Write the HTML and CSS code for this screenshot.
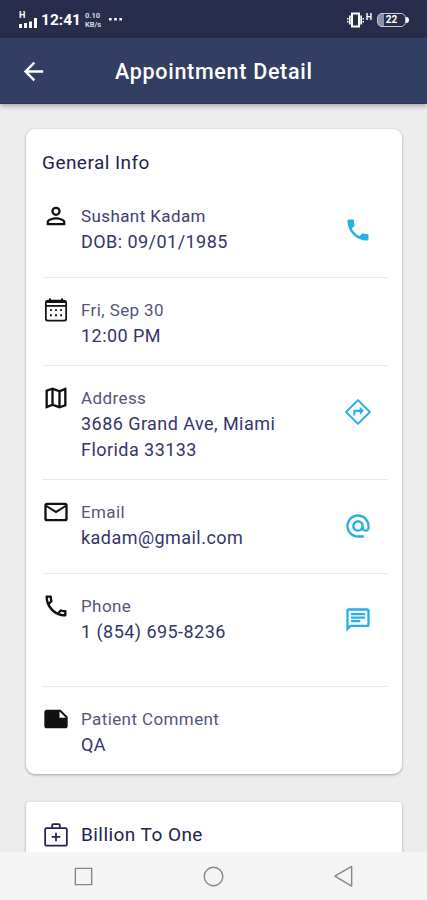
FILE: index.html
```
<!DOCTYPE html>
<html lang="en">
<head>
    <meta charset="UTF-8">
    <meta name="viewport" content="width=device-width, initial-scale=1.0">
    <title>Appointment Detail</title>
    <link rel="stylesheet" href="styles.css">
</head>
<body>
    <div class="status-bar">
        <div class="status-left">
            <div class="signal">
                <span>H</span>
                <svg width="18" height="9" viewBox="0 0 18 9"><path d="M0 5h3v4H0zM5 4h3v5H5zM10 2.500h3V9h-3zM15 -1h3v10h-3z"/></svg>
            </div>
            <span class="clock">12:41</span>
            <div class="speed"><span>0.10</span><span>KB/s</span></div>
            <svg class="dots" width="13" height="3" viewBox="0 0 13 3"><path d="M0 0h2.600v2.600H0zM5.200 0h2.600v2.600H5.200zM10.400 0H13v2.600h-2.600z"/></svg>
        </div>
        <div class="status-right">
            <svg width="17" height="16" viewBox="0 0 17 16"><path d="M5 1.500h7v13H5z" fill="none" stroke="#fff" stroke-width="2"/><path d="M2 3.500h1.700v9H2zM0 6h1.500v1.500H0zM0 9h1.500v1.500H0zM13.300 3.500H15v9h-1.700zM15.500 6H17v1.500h-1.500zM15.500 9H17v1.500h-1.500z"/></svg>
            <span class="net">H</span>
            <div class="battery"><span>22</span></div>
        </div>
    </div>

    <header class="app-bar">
        <svg class="back" viewBox="0 0 24 24"><path d="M20 11H7.830l5.590-5.590L12 4l-8 8 8 8 1.410-1.410L7.830 13H20v-2z"/></svg>
        <h1>Appointment Detail</h1>
    </header>

    <main class="content">
        <section class="card">
            <h2>General Info</h2>
            <div class="row">
                <svg class="icon" viewBox="0 0 24 24"><path d="M12 5.900a2.100 2.100 0 1 1 0 4.200 2.100 2.100 0 0 1 0-4.200m0 9c2.970 0 6.100 1.460 6.100 2.100v1.100H5.900V17c0-.640 3.130-2.100 6.100-2.100M12 4C9.790 4 8 5.790 8 8s1.790 4 4 4 4-1.790 4-4-1.790-4-4-4zm0 9c-2.670 0-8 1.340-8 4v3h16v-3c0-2.660-5.330-4-8-4z"/></svg>
                <div class="info">
                    <p class="label name">Sushant Kadam</p>
                    <p class="dob">DOB: 09/01/1985</p>
                </div>
                <a class="action"><svg viewBox="0 0 24 24"><path d="M6.620 10.790c1.440 2.830 3.760 5.140 6.590 6.590l2.200-2.200c.270-.270.670-.360 1.020-.240 1.120.370 2.330.570 3.570.570.550 0 1 .450 1 1V20c0 .550-.450 1-1 1-9.390 0-17-7.610-17-17 0-.550.450-1 1-1h3.500c.550 0 1 .450 1 1 0 1.250.200 2.450.570 3.570.110.350.030.740-.250 1.020l-2.200 2.200z"/></svg></a>
            </div>
            <div class="row">
                <svg class="icon icon-line" viewBox="0 0 24 24"><rect x="3.300" y="4" width="17.400" height="17.200" rx="2"/><path d="M3.500 8.500h17M6.800 2v3M17.200 2v3"/><path class="fill" d="M4 4h16v2H4zM6.900 11.300h1.600v1.600H6.900zM11.200 11.300h1.600v1.600h-1.600zM15.500 11.300h1.600v1.600h-1.600zM6.900 15.700h1.600v1.600H6.900zM11.200 15.700h1.600v1.600h-1.600zM15.500 15.700h1.600v1.600h-1.600z"/></svg>
                <div class="info">
                    <p class="label">Fri, Sep 30</p>
                    <p class="time">12:00 PM</p>
                </div>
            </div>
            <div class="row">
                <svg class="icon" viewBox="0 0 24 24"><path d="M20.500 3l-.160.030L15 5.100 9 3 3.360 4.900c-.210.070-.360.250-.360.480V20.500c0 .280.220.500.500.500l.160-.030L9 18.900l6 2.100 5.640-1.900c.210-.070.360-.250.360-.480V3.500c0-.280-.220-.500-.500-.500zM10 5.470l4 1.400v11.660l-4-1.400V5.470zm-5 .990l3-1.010v11.700l-3 1.160V6.460zm14 11.080l-3 1.010V6.860l3-1.160v11.840z"/></svg>
                <div class="info">
                    <p class="label">Address</p>
                    <p class="street">3686 Grand Ave, Miami</p>
                    <p class="city">Florida 33133</p>
                </div>
                <a class="action"><svg viewBox="0 0 24 24"><path d="M12 1.800 22.200 12 12 22.200 1.800 12z" fill="none" stroke="#27afe8" stroke-width="1.700" stroke-linejoin="round"/><path d="M8 15h1.800v-3h3.700v2.500L17 11l-3.500-3.500V10H9c-.600 0-1 .400-1 1v4z"/></svg></a>
            </div>
            <div class="row">
                <svg class="icon" viewBox="0 0 24 24"><path d="M22 6c0-1.100-.900-2-2-2H4c-1.100 0-2 .900-2 2v12c0 1.100.900 2 2 2h16c1.100 0 2-.900 2-2V6zm-2 0l-8 5-8-5h16zm0 12H4V8l8 5 8-5v10z"/></svg>
                <div class="info">
                    <p class="label">Email</p>
                    <p class="email">kadam@gmail.com</p>
                </div>
                <a class="action"><svg viewBox="0 0 24 24"><path d="M12 2C6.480 2 2 6.480 2 12s4.480 10 10 10h5v-2h-5c-4.340 0-8-3.660-8-8s3.660-8 8-8 8 3.660 8 8v1.430c0 .790-.710 1.570-1.500 1.570s-1.500-.780-1.500-1.570V12c0-2.760-2.240-5-5-5s-5 2.240-5 5 2.240 5 5 5c1.380 0 2.640-.560 3.540-1.470.650.890 1.770 1.470 2.960 1.470 1.970 0 3.500-1.600 3.500-3.570V12c0-5.520-4.480-10-10-10zm0 13c-1.660 0-3-1.340-3-3s1.340-3 3-3 3 1.340 3 3-1.340 3-3 3z"/></svg></a>
            </div>
            <div class="row row-phone">
                <svg class="icon" viewBox="0 0 24 24"><path d="M6.540 5c.060.890.210 1.760.450 2.590l-1.200 1.200c-.410-1.200-.670-2.470-.760-3.790h1.510m9.860 12.020c.850.240 1.720.390 2.600.450v1.490c-1.320-.090-2.590-.350-3.800-.750l1.200-1.190M7.500 3H4c-.550 0-1 .450-1 1 0 9.390 7.610 17 17 17 .550 0 1-.450 1-1v-3.490c0-.550-.450-1-1-1-1.240 0-2.450-.200-3.570-.570-.350-.110-.740-.030-1.020.240l-2.200 2.200c-2.830-1.450-5.150-3.760-6.590-6.590l2.200-2.200c.280-.280.360-.670.250-1.020C8.700 6.450 8.500 5.250 8.500 4c0-.550-.450-1-1-1z"/></svg>
                <div class="info">
                    <p class="label">Phone</p>
                    <p class="phone">1 (854) 695-8236</p>
                </div>
                <a class="action"><svg viewBox="0 0 24 24"><path d="M4 4h16v12H5.170L4 17.170V4m0-2c-1.100 0-1.990.900-1.990 2L2 22l4-4h14c1.100 0 2-.900 2-2V4c0-1.100-.900-2-2-2H4zm2 10h8v2H6v-2zm0-3h12v2H6V9zm0-3h12v2H6V6z"/></svg></a>
            </div>
            <div class="row">
                <svg class="icon" viewBox="0 0 24 24"><path d="M22 10l-6-6H4c-1.100 0-2 .900-2 2v12.010c0 1.100.900 1.990 2 1.990h16c1.100 0 2-.900 2-2v-8zm-7-4.500l5.500 5.500H15V5.500z"/></svg>
                <div class="info">
                    <p class="label">Patient Comment</p>
                    <p class="comment">QA</p>
                </div>
            </div>
        </section>

        <section class="card card-lab">
            <svg class="icon icon-line" viewBox="0 0 24 24"><rect x="2.700" y="6.200" width="18.600" height="15" rx="1"/><path d="M8.700 6V3.700c0-.600.400-1 1-1h4.600c.600 0 1 .400 1 1V6M12 10v7.400M8.300 13.700h7.400"/></svg>
            <h2>Billion To One</h2>
        </section>
    </main>

    <nav class="nav-bar">
        <svg viewBox="0 0 24 24"><path d="M3.500 3.500h17v17h-17z"/></svg>
        <svg viewBox="0 0 24 24"><circle cx="12" cy="12" r="9.700"/></svg>
        <svg viewBox="0 0 24 24"><path d="M20.500 1.500v20.500L3 11.700z" stroke-linejoin="round"/></svg>
    </nav>
</body>
</html>
```
FILE: styles.css
```
* {
    box-sizing: border-box;
    margin: 0;
    padding: 0;
}
body {
    height: 900px;
    display: flex;
    flex-direction: column;
    overflow: hidden;
    background: #ededed;
    color: #34366a;
    font-family: Roboto, sans-serif;
}
svg {
    display: block;
    fill: currentColor;
    flex-shrink: 0;
}
.status-bar {
    height: 38px;
    display: flex;
    justify-content: space-between;
    padding: 0 18px 0 19px;
    background: #272d4a;
    color: #fff;
    flex-shrink: 0;
}
.status-left, .status-right {
    display: flex;
    align-items: center;
    padding-top: 1px;
}
.signal {
    width: 18px;
    font-size: 9px;
    font-weight: 700;
    line-height: 7px;
}
.signal span, .signal svg { display: block; }
.signal svg { overflow: visible; }
.clock {
    margin-left: 4px;
    font-size: 15.5px;
    font-weight: 700;
    width: 39px;
}
.speed {
    display: flex;
    flex-direction: column;
    width: 18px;
    margin-left: 5px;
    font-size: 7.5px;
    font-weight: 700;
    line-height: 9px;
    color: #d5d8e4;
}
.dots { margin-left: 6px; }
.net {
    margin: -6px 5px 0 2px;
    font-size: 9px;
    font-weight: 700;
}
.battery {
    position: relative;
    width: 29px;
    height: 14px;
    margin-right: 3px;
    border: 1.5px solid #c5c9d8;
    border-radius: 5px;
    background: linear-gradient(to right, #8d92a6 22%, transparent 22%);
    font-size: 10px;
    font-weight: 700;
    line-height: 12px;
    text-align: center;
}
.battery::after {
    content: "";
    position: absolute;
    right: -4px;
    top: 3px;
    width: 3px;
    height: 6px;
    border-radius: 0 3px 3px 0;
    background: #fff;
}
.app-bar {
    height: 66px;
    display: flex;
    align-items: center;
    padding: 2px 19px 0;
    background: #333f62;
    border-bottom: 1px solid #22345f;
    box-shadow: 0 2px 5px rgba(0, 0, 0, 0.3);
    color: #fff;
    flex-shrink: 0;
    z-index: 1;
}
.back {
    width: 29px;
    height: 29px;
}
.app-bar h1 {
    margin-left: 67px;
    font-size: 21.5px;
    font-weight: 500;
    letter-spacing: 0.7px;
}
.content {
    flex: 1;
    min-height: 0;
    overflow: hidden;
    padding: 25px 25px 0 26px;
}
.card {
    height: 645px;
    padding: 21px 14px 0 16px;
    background: #fff;
    border-radius: 9px;
    box-shadow: 0 1px 3px rgba(0, 0, 0, 0.32);
}
.card h2 {
    font-size: 19px;
    font-weight: 400;
    line-height: 26px;
    letter-spacing: 0.45px;
    color: #22244e;
}
.row {
    display: flex;
    padding: 19px 0 16px;
    border-bottom: 1px solid #e9e9e9;
}
h2 + .row { padding-top: 27px; }
.row:last-child { border-bottom: none; }
.row-phone { padding-bottom: 35px; }
.icon {
    width: 28px;
    height: 28px;
    margin-top: -1px;
    color: #111;
}
.icon-line {
    fill: none;
    stroke: currentColor;
    stroke-width: 1.5;
}
.icon-line .fill {
    fill: currentColor;
    stroke: none;
}
.info {
    flex: 1;
    margin-left: 11px;
    font-size: 18px;
    line-height: 26px;
    letter-spacing: 0.45px;
}
.label {
    font-size: 17px;
    letter-spacing: 0.4px;
    color: #54567a;
}
.name { color: #3f4170; }
.action {
    height: 58px;
    padding: 13px 16px 0 0;
    color: #27afe8;
}
.action svg {
    width: 28px;
    height: 28px;
}
.card-lab {
    display: flex;
    height: 80px;
    margin-top: 28px;
    padding-top: 20px;
    border-radius: 4px;
}
.card-lab .icon { color: #22244e; }
.card-lab h2 { margin-left: 11px; }
.nav-bar {
    height: 48px;
    display: flex;
    justify-content: space-between;
    align-items: center;
    padding: 0 72px;
    background: #f5f5f5;
    flex-shrink: 0;
}
.nav-bar svg {
    width: 23px;
    height: 23px;
    fill: none;
    stroke: #888;
    stroke-width: 1.5;
}
```
